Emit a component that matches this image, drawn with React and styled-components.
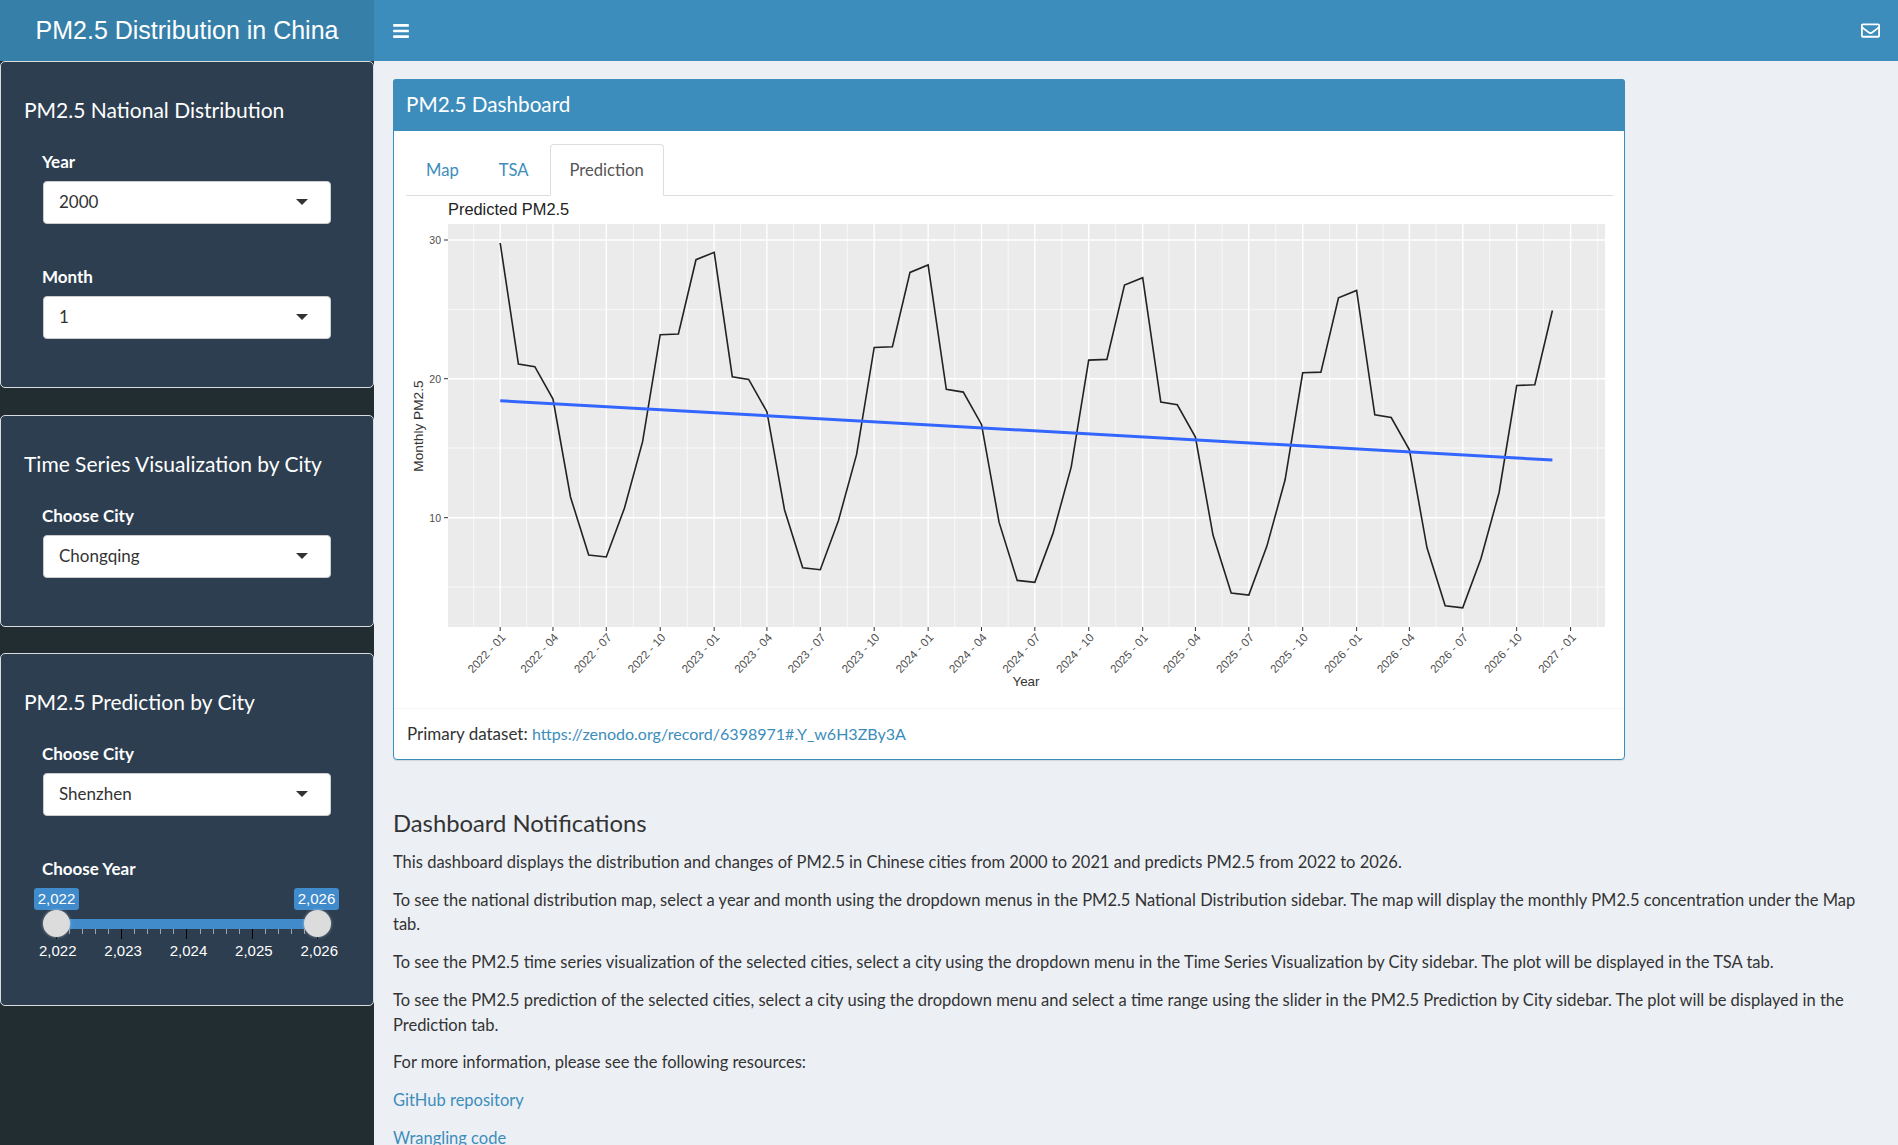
import React from 'react';
import styled, { createGlobalStyle } from 'styled-components';
import { FaBars, FaRegEnvelope } from 'react-icons/fa';

const GlobalStyle = createGlobalStyle`
  html, body {
    margin: 0;
    height: 100%;
    overflow: hidden;
    background: #ecf0f5;
  }
  body {
    font-family: Lato, "Noto Sans", sans-serif;
    color: #333;
  }
  * { box-sizing: border-box; }
`;

const Header = styled.header`
  display: flex;
  height: 61px;
  background: #3c8dbc;
  color: #fff;
`;

const Logo = styled.div`
  width: 374px;
  background: #367fa9;
  font: 25px/60px "Liberation Sans", Arial, sans-serif;
  text-align: center;
`;

const Navbar = styled.nav`
  flex: 1;
  display: flex;
  align-items: center;
  justify-content: space-between;
  padding: 0 18px 0 18px;
`;

const Body = styled.div`
  display: flex;
  height: 1084px;
`;

const Sidebar = styled.aside`
  width: 374px;
  flex: none;
  background: #222d32;
`;

const Panel = styled.section`
  width: 374px;
  padding: 33px 0 48px;
  margin-bottom: 26px;
  background: #2c3e50;
  border: 1px solid #d8dcdf;
  border-radius: 5px;
  &:first-child { margin-bottom: 27px; }
`;

const PanelTitle = styled.h3`
  margin: 0 0 26px 23px;
  font-size: 21px;
  line-height: 30px;
  font-weight: 400;
  color: #fff;
`;

const Field = styled.div`
  margin: 0 42px 42px;
  &:last-child { margin-bottom: 0; }
`;

const Label = styled.label`
  display: block;
  height: 22px;
  margin: 0 0 8px -1px;
  font-size: 17px;
  line-height: 21px;
  font-weight: 700;
  color: #fff;
`;

const Select = styled.div`
  display: flex;
  align-items: center;
  justify-content: space-between;
  height: 43px;
  padding: 0 22px 2px 15px;
  background: #fff;
  border: 1px solid #ccc;
  border-radius: 4px;
  font-size: 17px;
  color: #333;
  &:after {
    content: '';
    border-top: 6px solid #333;
    border-left: 6px solid transparent;
    border-right: 6px solid transparent;
  }
`;

const Slider = styled.div`
  position: relative;
  margin-bottom: -3px;
`;

const ValueRow = styled.div`
  display: flex;
  justify-content: space-between;
  margin: 0 -8px 9px -9px;
`;

const ValueTag = styled.span`
  width: 45px;
  height: 22px;
  background: #3f8bcb;
  border-radius: 3px;
  color: #fff;
  font: 15px/22px "Liberation Sans", Arial, sans-serif;
  text-align: center;
`;

const Track = styled.div`
  height: 10px;
  margin: 0 13px;
  background: #428bca;
`;

const Handle = styled.span`
  position: absolute;
  top: 22px;
  left: ${p => p.$left}px;
  width: 27px;
  height: 27px;
  border-radius: 50%;
  background: #dcdcdc;
  box-shadow: 0 0 3px rgba(255, 255, 255, 0.5);
`;

const TickRow = styled.div`
  display: flex;
  justify-content: space-between;
  height: 12px;
  margin: 0 13px;
`;

const Tick = styled.i`
  width: 1px;
  height: ${p => (p.$major ? 10 : 5)}px;
  background: ${p => (p.$major ? '#000' : '#9aa2aa')};
`;

const TickLabels = styled.div`
  display: flex;
  justify-content: space-between;
  margin: 0 -7px 0 -4px;
  color: #fff;
  font: 15px/19px "Liberation Sans", Arial, sans-serif;
`;

const Main = styled.main`
  flex: 1;
  min-width: 0;
  padding: 18px 20px 0 19px;
`;

const Box = styled.section`
  width: 1232px;
  background: #fff;
  border: 1px solid #3c8dbc;
  border-radius: 4px;
  box-shadow: 0 1px 1px rgba(0, 0, 0, 0.1);
`;

const BoxHeader = styled.div`
  height: 52px;
  padding-left: 13px;
  margin: -1px -1px 0;
  background: #3c8dbc;
  border-radius: 3px 3px 0 0;
  color: #fff;
  font-size: 20.7px;
  line-height: 50px;
`;

const Tabs = styled.ul`
  display: flex;
  height: 52px;
  margin: 13px 11px 0 12px;
  padding: 0;
  list-style: none;
  border-bottom: 1px solid #ddd;
`;

const Tab = styled.li`
  height: 52px;
  padding: 0 19px;
  font-size: 16.6px;
  line-height: 50px;
  color: ${p => (p.$active ? '#555' : '#3c8dbc')};
  background: ${p => (p.$active ? '#fff' : 'transparent')};
  border: 1px solid ${p => (p.$active ? '#ddd' : 'transparent')};
  border-bottom-color: ${p => (p.$active ? '#fff' : 'transparent')};
  border-radius: 4px 4px 0 0;
  margin-left: ${p => (p.$active ? '1px' : '0')};
`;

const ChartSvg = styled.svg`
  display: block;
  width: 1230px;
  height: 512px;
`;

const BoxFooter = styled.div`
  height: 51px;
  padding-left: 13px;
  border-top: 1px solid #f4f4f4;
  font-size: 17px;
  line-height: 49px;
`;

const Link = styled.a`
  color: #3c8dbc;
  text-decoration: none;
`;

const DatasetLink = styled(Link)`
  font-size: 16.05px;
`;

const Heading = styled.h3`
  margin: 48px 0 12px;
  font-size: 23.8px;
  line-height: 30px;
  font-weight: 400;
`;

const Para = styled.p`
  margin: 0 0 13px;
  font-size: 16.5px;
  line-height: 24.7px;
`;

const yearX = d => 500.2 + (Date.UTC(d[0], d[1], 1) - Date.UTC(2022, 0, 1)) / 86400000 * 0.5862;

// y position of each calendar month in 2022, the series drifts down by 12.7px a year
const monthY = [239.6, 364, 366.7, 399, 497, 555, 557, 508, 441.7, 334.7, 334, 259.7];

const linePoints = [];
for (let y = 2022; y <= 2026; y++) {
  for (let m = 0; m < 12; m++) {
    const py = y === 2022 && m === 0 ? 243 : monthY[m] + 12.7 * (y - 2022);
    linePoints.push(`${yearX([y, m]).toFixed(1)},${py.toFixed(1)}`);
  }
}

const xTicks = [];
for (let i = 0; i <= 20; i++) {
  const y = 2022 + Math.floor(i / 4);
  const m = (i % 4) * 3;
  xTicks.push({ x: yearX([y, m]), label: `${y} - ${String(m + 1).padStart(2, '0')}` });
}

const minorX = [473.7, 1597.7];
xTicks.slice(1).forEach((t, i) => minorX.push((t.x + xTicks[i].x) / 2));

const Chart = () => (
  <ChartSvg viewBox="394 196 1230 512">
    <text x="448" y="215" fontFamily="Liberation Sans" fontSize="16.4" fill="#222">Predicted PM2.5</text>
    <rect x="448" y="224" width="1157" height="403" fill="#ebebeb" />
    {[309.3, 448, 587].map(y => <line key={y} x1="448" x2="1605" y1={y} y2={y} stroke="#fff" strokeWidth="0.7" />)}
    {minorX.map(x => <line key={x} x1={x} x2={x} y1="224" y2="627" stroke="#fff" strokeWidth="0.7" />)}
    {[240, 378.7, 517.7].map(y => <line key={y} x1="448" x2="1605" y1={y} y2={y} stroke="#fff" strokeWidth="1.4" />)}
    {xTicks.map(t => <line key={t.label} x1={t.x} x2={t.x} y1="224" y2="627" stroke="#fff" strokeWidth="1.4" />)}
    <polyline points={linePoints.join(' ')} fill="none" stroke="#222" strokeWidth="1.6" />
    <line x1="500.2" y1="400.7" x2="1552.4" y2="460" stroke="#3366ff" strokeWidth="3" />
    {[[240, 30], [378.7, 20], [517.7, 10]].map(([y, v]) => (
      <g key={v}>
        <line x1="444" x2="448" y1={y} y2={y} stroke="#333" strokeWidth="1" />
        <text x="441" y={y + 4} textAnchor="end" fontFamily="Liberation Sans" fontSize="10.5" fill="#4d4d4d">{v}</text>
      </g>
    ))}
    {xTicks.map(t => (
      <g key={t.label}>
        <line x1={t.x} x2={t.x} y1="627" y2="631" stroke="#333" strokeWidth="1" />
        <text
          x={t.x + 6}
          y="638"
          textAnchor="end"
          transform={`rotate(-47 ${t.x + 6} 638)`}
          fontFamily="Liberation Sans"
          fontSize="11.6"
          fill="#4d4d4d"
        >
          {t.label}
        </text>
      </g>
    ))}
    <text x="1026" y="686" textAnchor="middle" fontFamily="Liberation Sans" fontSize="13.4" fill="#333">Year</text>
    <text
      x="423"
      y="426"
      textAnchor="middle"
      transform="rotate(-90 423 426)"
      fontFamily="Liberation Sans"
      fontSize="13.7"
      fill="#333"
    >
      Monthly PM2.5
    </text>
  </ChartSvg>
);

const ticks = Array.from({ length: 21 }, (_, i) => i);

const App = () => (
  <>
    <GlobalStyle />
    <Header>
      <Logo>PM2.5 Distribution in China</Logo>
      <Navbar>
        <FaBars size={18} />
        <FaRegEnvelope size={19} />
      </Navbar>
    </Header>
    <Body>
      <Sidebar>
        <Panel>
          <PanelTitle>PM2.5 National Distribution</PanelTitle>
          <Field>
            <Label>Year</Label>
            <Select>2000</Select>
          </Field>
          <Field>
            <Label>Month</Label>
            <Select>1</Select>
          </Field>
        </Panel>
        <Panel>
          <PanelTitle>Time Series Visualization by City</PanelTitle>
          <Field>
            <Label>Choose City</Label>
            <Select>Chongqing</Select>
          </Field>
        </Panel>
        <Panel>
          <PanelTitle>PM2.5 Prediction by City</PanelTitle>
          <Field>
            <Label>Choose City</Label>
            <Select>Shenzhen</Select>
          </Field>
          <Field>
            <Label>Choose Year</Label>
            <Slider>
              <ValueRow>
                <ValueTag>2,022</ValueTag>
                <ValueTag>2,026</ValueTag>
              </ValueRow>
              <Track />
              <TickRow>
                {ticks.map(i => <Tick key={i} $major={i % 5 === 0} />)}
              </TickRow>
              <TickLabels>
                <span>2,022</span>
                <span>2,023</span>
                <span>2,024</span>
                <span>2,025</span>
                <span>2,026</span>
              </TickLabels>
              <Handle $left={0} />
              <Handle $left={261} />
            </Slider>
          </Field>
        </Panel>
      </Sidebar>
      <Main>
        <Box>
          <BoxHeader>PM2.5 Dashboard</BoxHeader>
          <Tabs>
            <Tab>Map</Tab>
            <Tab>TSA</Tab>
            <Tab $active>Prediction</Tab>
          </Tabs>
          <Chart />
          <BoxFooter>
            Primary dataset: <DatasetLink href="#">https://zenodo.org/record/6398971#.Y_w6H3ZBy3A</DatasetLink>
          </BoxFooter>
        </Box>
        <Heading>Dashboard Notifications</Heading>
        <Para>This dashboard displays the distribution and changes of PM2.5 in Chinese cities from 2000 to 2021 and predicts PM2.5 from 2022 to 2026.</Para>
        <Para>To see the national distribution map, select a year and month using the dropdown menus in the PM2.5 National Distribution sidebar. The map will display the monthly PM2.5 concentration under the Map tab.</Para>
        <Para>To see the PM2.5 time series visualization of the selected cities, select a city using the dropdown menu in the Time Series Visualization by City sidebar. The plot will be displayed in the TSA tab.</Para>
        <Para>To see the PM2.5 prediction of the selected cities, select a city using the dropdown menu and select a time range using the slider in the PM2.5 Prediction by City sidebar. The plot will be displayed in the Prediction tab.</Para>
        <Para>For more information, please see the following resources:</Para>
        <Para><Link href="#">GitHub repository</Link></Para>
        <Para><Link href="#">Wrangling code</Link></Para>
      </Main>
    </Body>
  </>
);

export default App;
